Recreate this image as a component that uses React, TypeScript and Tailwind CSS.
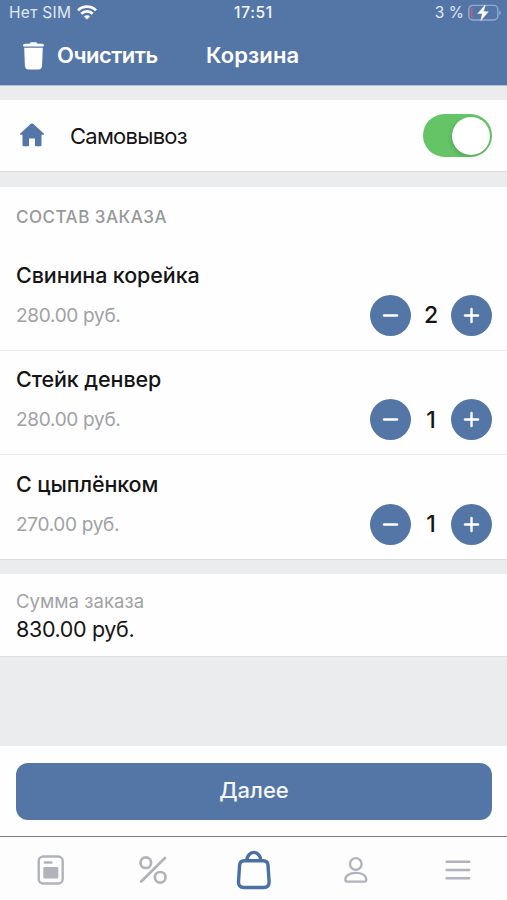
import { useState } from "react";

type Item = {
  id: number;
  name: string;
  price: string;
  count: number;
};

const initialItems: Item[] = [
  { id: 1, name: "Свинина корейка", price: "280.00 руб.", count: 2 },
  { id: 2, name: "Стейк денвер", price: "280.00 руб.", count: 1 },
  { id: 3, name: "С цыплёнком", price: "270.00 руб.", count: 1 },
];

function StatusBar() {
  return (
    <div className="grid h-[26px] grid-cols-3 items-center pl-[9px] pr-[6px] text-[15.5px] leading-none text-[#dfe8f5]">
      <div className="flex items-center gap-[6px]">
        <span className="whitespace-nowrap tracking-[0.3px]">Нет SIM</span>
        <svg width="20" height="15" viewBox="0 0 20 15" className="-mt-[2px]" fill="none" stroke="#fff" strokeWidth="2.7">
          <path d="M1 5.4a12.8 12.8 0 0 1 18 0" />
          <path d="M4.3 8.8a8.1 8.1 0 0 1 11.4 0" />
          <path d="M10 14.6 6.9 11.5a4.4 4.4 0 0 1 6.2 0Z" fill="#fff" stroke="none" />
        </svg>
      </div>
      <span className="pr-[3px] text-center font-medium tracking-[0.7px] text-[#f2f6fc]">17:51</span>
      <div className="flex items-center justify-end gap-[4px]">
        <span className="whitespace-nowrap">3 %</span>
        <svg width="33" height="18" viewBox="0 0 33 18" fill="none">
          <rect x="0.8" y="1.4" width="29" height="14.6" rx="4" stroke="#91abd0" strokeWidth="1.4" />
          <path d="M3 4.6q0-1.4 1.6-1.4v11q-1.6 0-1.6-1.4Z" fill="#c75f70" />
          <path d="M31.3 6.2q1.5.8 1.5 2.500t-1.5 2.500Z" fill="#91abd0" />
          <path d="M17.2 1 9.700 9.600h4.700L12.800 16.500l7.500-8.800h-4.800Z" fill="#fff" stroke="#fff" strokeWidth="0.5" />
        </svg>
      </div>
    </div>
  );
}

function RoundButton({ plus, onClick }: { plus?: boolean; onClick: () => void }) {
  return (
    <button
      onClick={onClick}
      className="flex h-[41px] w-[41px] items-center justify-center rounded-full bg-[#5476a7]"
    >
      <svg width="17" height="17" viewBox="0 0 17 17" stroke="#fff" strokeWidth="2.4" strokeLinecap="round">
        <path d="M2 8.5h13" />
        {plus && <path d="M8.5 2v13" />}
      </svg>
    </button>
  );
}

function TabBar() {
  return (
    <nav className="-mr-[1.5px] grid h-[64px] grid-cols-5 items-center border-t border-[#777a80] bg-[#fdfdfe] pt-[3px]">
      <button className="flex justify-center">
        <svg width="28" height="30" viewBox="0 0 28 30" fill="none" stroke="#b0b3bb">
          <rect x="1.7" y="1.5" width="24" height="27" rx="4.5" strokeWidth="2.4" />
          <path d="M7.8 7.5h6.500" strokeWidth="2.4" strokeLinecap="round" />
          <rect x="6.3" y="12" width="15" height="11.5" rx="1" fill="#b0b3bb" stroke="none" />
        </svg>
      </button>
      <button className="flex justify-center">
        <svg width="30" height="30" viewBox="0 0 30 30" fill="none" stroke="#b0b3bb" strokeWidth="2.7">
          <circle cx="7.8" cy="7.7" r="5.3" />
          <circle cx="22.2" cy="22.3" r="5.3" />
          <path d="M27 3 3.200 26.500" strokeLinecap="round" />
        </svg>
      </button>
      <button className="flex justify-center">
        <svg width="36" height="40" viewBox="0 0 36 40" fill="none" stroke="#4a70a5" strokeWidth="3.4">
          <path d="M8.300 10.700h19q4.400 0 4.700 4.500l1.100 16.300q.2 6-5.400 6H7.900q-5.600 0-5.400-6L3.600 15.200q.3-4.500 4.700-4.500Z" />
          <path d="M10.800 10.700a7 8.300 0 0 1 14 0" />
        </svg>
      </button>
      <button className="flex justify-center">
        <svg width="26" height="28" viewBox="0 0 26 28" fill="none" stroke="#b0b3bb" strokeWidth="2.3">
          <circle cx="12.800" cy="8" r="5.800" />
          <path d="M4.200 25.700h17.200q1.900 0 1.900-1.900c0-4.200-4.200-6.900-10.500-6.900s-10.500 2.700-10.500 6.900q0 1.900 1.900 1.900Z" />
        </svg>
      </button>
      <button className="flex justify-center">
        <svg width="26" height="22" viewBox="0 0 26 22" stroke="#b0b3bb" strokeWidth="2.600" strokeLinecap="round">
          <path d="M1.700 2.800h22.400M1.700 11h22.400M1.700 19.200h22.400" />
        </svg>
      </button>
    </nav>
  );
}

export default function App() {
  const [items, setItems] = useState(initialItems);
  const [pickup, setPickup] = useState(true);

  const change = (id: number, step: number) => {
    setItems(items.map(i => (i.id === id ? { ...i, count: Math.max(0, i.count + step) } : i)));
  };

  return (
    <div className="flex h-[900px] w-[507px] flex-col overflow-hidden bg-[#ebecee] font-['Inter','Liberation_Sans',sans-serif] text-[#151515]">
      <header className="h-[86px] shrink-0 border-b border-[#b4c1d6] bg-[#5476a7] text-white">
        <StatusBar />
        <div className="flex h-[59px] items-center pl-[22px]">
          <button onClick={() => setItems([])} className="flex items-center">
            <svg width="23" height="28" viewBox="0 0 23 28" fill="#fff">
              <path d="M3 1.700h4.500Q8 .3 9.500.3h4q1.500 0 2 1.400H20q2 0 2 1.800 0 .9-1 .9H2q-1 0-1-.9 0-1.800 2-1.800Z" />
              <path d="M2.200 5.800h18.600l-.7 17.700q-.2 3.900-3.700 3.900H6.600q-3.500 0-3.700-3.900Z" />
            </svg>
            <span className="ml-[12px] w-[102px] whitespace-nowrap text-left text-[22px] font-semibold tracking-[-0.5px]">
              Очистить
            </span>
          </button>
          <h1 className="ml-[47px] text-[22px] font-semibold tracking-[0.1px]">Корзина</h1>
        </div>
      </header>

      <section className="mt-[14px] flex h-[72px] shrink-0 items-center border-b border-[#dcdddf] bg-[#fefefe] pl-[19px] pr-[15px]">
        <svg width="26" height="24" viewBox="0 0 26 24" className="-mt-[1px]" fill="#5476a7">
          <path d="M11.900.8q1.100-1 2.200 0l10.600 9.700q.8 1-.5 1.300H22.500v10.300q0 1.200-1.200 1.200h-4.500q-.8 0-.8-.8v-7h-6v7q0 .8-.8.8H4.700q-1.200 0-1.200-1.200V11.800H1.800q-1.300-.3-.5-1.300Z" />
        </svg>
        <span className="ml-[25px] pt-[1px] text-[22px] tracking-[-0.75px]">Самовывоз</span>
        <button
          onClick={() => setPickup(!pickup)}
          className={`ml-auto flex h-[43px] w-[69px] items-center rounded-full px-[2px] ${pickup ? "justify-end bg-[#64c466]" : "justify-start bg-gray-300"}`}
        >
          <span className="h-[38px] w-[38px] rounded-full bg-white shadow-[-1px_2px_4px_rgba(0,0,0,0.15)]" />
        </button>
      </section>

      <section className="mt-[15px] shrink-0 border-b border-[#dcdddf] bg-[#fefefe]">
        <h2 className="flex h-[59px] items-center pl-[16px] pt-[2px] text-[17px] font-medium tracking-[0.5px] text-[#96989a]">
          СОСТАВ ЗАКАЗА
        </h2>
        {items.map(item => (
          <div
            key={item.id}
            className="flex h-[104.5px] flex-col border-b border-[#e8e9eb] pl-[16px] pr-[15px] pt-[13.5px] last:h-[104px] last:border-b-0"
          >
            <h3 className="h-[30px] text-[21.5px] font-medium leading-[30px] tracking-[-0.1px]">{item.name}</h3>
            <div className="mt-[5px] flex h-[41px] items-center">
              <span className="pt-[2px] text-[19px] tracking-[-0.3px] text-[#a0a2a4]">{item.price}</span>
              <div className="ml-auto flex items-center">
                <RoundButton onClick={() => change(item.id, -1)} />
                <span className="w-[40px] pt-[1px] text-center text-[23px] font-medium leading-none">{item.count}</span>
                <RoundButton plus onClick={() => change(item.id, 1)} />
              </div>
            </div>
          </div>
        ))}
      </section>

      <section className="mt-[14px] h-[83px] shrink-0 border-b border-[#dcdddf] bg-[#fefefe] pl-[16px] pt-[14px]">
        <p className="text-[18.5px] leading-[26px] tracking-[0.05px] text-[#a0a2a4]">Сумма заказа</p>
        <p className="text-[21.5px] leading-[30px] tracking-[-0.35px]">830.00 руб.</p>
      </section>

      <footer className="mt-auto shrink-0">
        <div className="h-[90px] bg-[#fefefe] pl-[16px] pr-[15px] pt-[17px]">
          <button className="h-[57px] w-full rounded-[12px] bg-[#5476a7] pb-[2px] text-[22px] font-medium text-[#f4f7fc]">
            Далее
          </button>
        </div>
        <TabBar />
      </footer>
    </div>
  );
}
